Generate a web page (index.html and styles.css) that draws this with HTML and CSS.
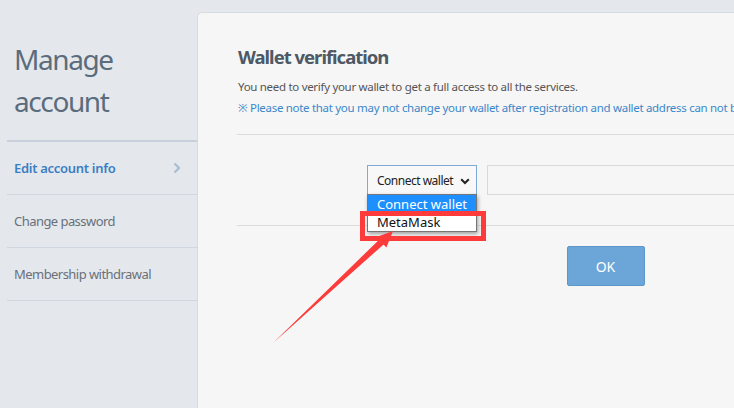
FILE: index.html
```html
<!DOCTYPE html>
<html>
<head>
<meta charset="utf-8">
<link rel="stylesheet" href="styles.css">
</head>
<body>
<div class="page">
  <aside class="sidebar">
    <h1 class="side-title">Manage<br>account</h1>
    <nav class="menu">
      <a class="menu-item active">Edit account info
        <svg class="chev" width="8" height="12" viewBox="0 0 8 12"><path d="M1.5 1.5 L6 6 L1.5 10.5" fill="none" stroke="#a8bdd3" stroke-width="2.2"/></svg>
      </a>
      <a class="menu-item">Change password</a>
      <a class="menu-item">Membership withdrawal</a>
    </nav>
  </aside>
  <main class="panel">
    <h2 class="heading">Wallet verification</h2>
    <p class="desc">You need to verify your wallet to get a full access to all the services.</p>
    <p class="note">※ Please note that you may not change your wallet after registration and wallet address can not be modified.</p>
    <div class="form-row">
      <div class="select-wrap">
        <div class="select">Connect wallet
          <svg class="sel-chev" width="10" height="7" viewBox="0 0 10 7"><path d="M1.2 1.2 L5 5 L8.8 1.2" fill="none" stroke="#222" stroke-width="2"/></svg>
        </div>
        <div class="dropdown">
          <div class="opt selected">Connect wallet</div>
          <div class="opt">MetaMask</div>
        </div>
        <div class="highlight"></div>
      </div>
      <div class="addr"></div>
    </div>
    <div class="actions">
      <button class="ok">OK</button>
    </div>
  </main>
</div>
<svg class="arrow" width="734" height="408" viewBox="0 0 734 408">
  <polygon points="273,343 378.6,240.2 375.8,237.3 393,231 386.4,247.4 383.6,244.4" fill="#fd3b3b"/>
</svg>
</body>
</html>
```
FILE: styles.css
```css
html, body {
  margin: 0;
  padding: 0;
}
body {
  width: 734px;
  height: 408px;
  overflow: hidden;
  background: #e4e8ed;
  font-family: "Noto Sans", "Open Sans", sans-serif;
  position: relative;
}
.page {
  display: flex;
  align-items: flex-start;
  width: 1100px;
}
.sidebar {
  width: 190px;
  padding-left: 7px;
  flex: none;
}
.side-title {
  margin: 0;
  padding: 38px 0 18px 7px;
  font-size: 28px;
  font-weight: normal;
  line-height: 42px;
  color: #5b6c7c;
  letter-spacing: -1.4px;
  border-bottom: 2px solid #c8d1db;
}
.menu {
  display: flex;
  flex-direction: column;
}
.menu-item {
  display: flex;
  align-items: center;
  justify-content: space-between;
  height: 52px;
  padding: 0 16px 0 7px;
  border-bottom: 1px solid #cfd7e0;
  font-size: 13px;
  color: #6a7079;
  letter-spacing: -0.55px;
}
.menu-item.active {
  color: #3b7dc3;
  font-weight: 600;
  letter-spacing: -0.3px;
}
.panel {
  margin-top: 12px;
  width: 777px;
  height: 420px;
  padding: 0 0 0 39px;
  background: #f6f6f6;
  border: 1px solid #d4dbe3;
  border-radius: 5px 0 0 0;
  flex: none;
}
.heading {
  margin: 32px 0 0 1px;
  font-size: 18.5px;
  font-weight: 700;
  line-height: 24px;
  color: #4d5964;
  letter-spacing: -1px;
}
.desc {
  margin: 8px 0 0 1px;
  font-size: 11.5px;
  line-height: 20px;
  color: #555;
  letter-spacing: -0.3px;
}
.note {
  margin: 1px 0 0 0;
  padding-left: 1px;
  font-size: 11.5px;
  line-height: 20px;
  color: #3a87c9;
  letter-spacing: -0.3px;
  white-space: nowrap;
  border-bottom: 1px solid #dcdcdc;
  padding-bottom: 16px;
}
.form-row {
  display: flex;
  gap: 10px;
  margin-left: 130px;
  padding: 30px 0;
  position: relative;
  z-index: 2;
}
.select-wrap {
  position: relative;
  width: 110px;
  flex: none;
}
.select {
  box-sizing: border-box;
  height: 30px;
  border: 1px solid #7fa9d8;
  background: #f8f8f8;
  font-size: 12px;
  color: #222;
  display: flex;
  align-items: center;
  padding-left: 9px;
  letter-spacing: -0.5px;
  position: relative;
}
.sel-chev {
  position: absolute;
  right: 6px;
  top: 12px;
}
.dropdown {
  position: absolute;
  left: 0;
  top: 29px;
  width: 110px;
  box-sizing: border-box;
  border: 1px solid #767676;
  background: #fff;
  box-shadow: 1px 2px 4px rgba(0,0,0,0.35);
}
.opt {
  height: 18px;
  line-height: 18px;
  padding-left: 9px;
  font-size: 13px;
  color: #111;
}
.opt.selected {
  background: #1e8fff;
  color: #fff;
}
.highlight {
  position: absolute;
  left: -7px;
  top: 46px;
  width: 126px;
  height: 30px;
  box-sizing: border-box;
  border: 5px solid #fd3b3b;
}
.addr {
  flex: none;
  width: 600px;
  height: 30px;
  box-sizing: border-box;
  border: 1px solid #d8d8d8;
  background: #f6f6f6;
}
.actions {
  border-top: 1px solid #dcdcdc;
  width: 737px;
  padding-top: 20px;
  display: flex;
  justify-content: center;
}
.ok {
  width: 78px;
  height: 40px;
  background: #6ca6d8;
  border: 1px solid #5d97ca;
  border-radius: 2px;
  color: #fff;
  font-family: "Noto Sans", sans-serif;
  font-size: 14px;
  padding: 0;
}
.arrow {
  position: absolute;
  left: 0;
  top: 0;
  z-index: 5;
  pointer-events: none;
}
```
